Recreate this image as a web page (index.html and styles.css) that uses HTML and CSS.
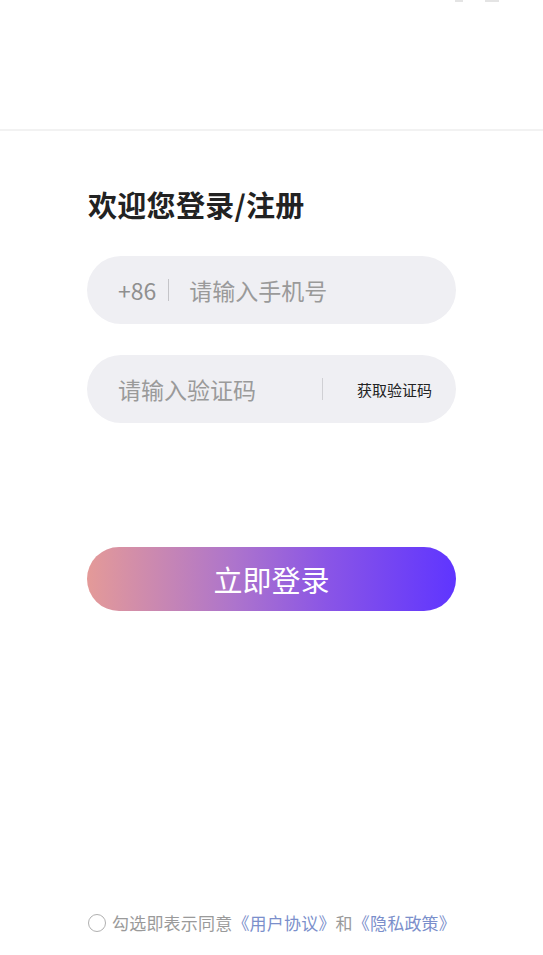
FILE: index.html
```html
<!DOCTYPE html>
<html lang="zh">
<head>
<meta charset="utf-8">
<link rel="stylesheet" href="styles.css">
</head>
<body>
<div class="page">
  <div class="header">
    <span class="mark mark-a"></span>
    <span class="mark mark-b"></span>
  </div>
  <div class="main">
    <h1 class="title">欢迎您登录/注册</h1>
    <div class="field">
      <span class="prefix">+86</span>
      <span class="sep"></span>
      <span class="ph">请输入手机号</span>
    </div>
    <div class="field field-code">
      <span class="ph">请输入验证码</span>
      <span class="sep sep-code"></span>
      <span class="getcode">获取验证码</span>
    </div>
    <div class="btn">立即登录</div>
  </div>
  <div class="footer">
    <span class="radio"></span>
    <span class="agree">勾选即表示同意<span class="link">《用户协议》</span>和<span class="link">《隐私政策》</span></span>
  </div>
</div>
</body>
</html>
```

FILE: styles.css
```css
html, body {
  margin: 0;
  padding: 0;
  background: #ffffff;
}
body {
  font-family: "Noto Sans CJK SC", "Noto Sans", sans-serif;
}
.page {
  width: 543px;
  height: 955px;
  display: flex;
  flex-direction: column;
  overflow: hidden;
}
.header {
  height: 129px;
  border-bottom: 2px solid #f2f2f2;
  display: flex;
  justify-content: flex-end;
  align-items: flex-start;
  gap: 22px;
  padding-right: 44px;
}
.mark {
  height: 2px;
  background: #e4e4e4;
}
.mark-a {
  width: 8px;
}
.mark-b {
  width: 14px;
}
.main {
  padding: 0 87px;
  display: flex;
  flex-direction: column;
}
.title {
  margin: 53px 0 0 1px;
  font-size: 29px;
  letter-spacing: 0.3px;
  line-height: 40px;
  font-weight: 700;
  color: #222222;
}
.field {
  margin-top: 32px;
  height: 68px;
  border-radius: 34px;
  background: #efeff3;
  display: flex;
  align-items: center;
  padding-left: 31px;
  padding-right: 24px;
}
.field-code {
  padding-left: 31px;
}
.prefix {
  font-size: 23px;
  color: #8f8f8f;
}
.sep {
  width: 1px;
  height: 22px;
  background: #c4c4c8;
  margin: 0 20px 0 12px;
}
.ph {
  font-size: 23px;
  color: #9a9a9a;
}
.sep-code {
  margin: 0 0 0 auto;
  background: #d0d0d4;
}
.getcode {
  margin-left: 34px;
  font-size: 15px;
  color: #222222;
}
.field + .field {
  margin-top: 31px;
}
.btn {
  margin-top: 124px;
  height: 64px;
  border-radius: 32px;
  background: linear-gradient(90deg, #e49a98 0%, #ad74cc 40%, #8a55e6 65%, #5f35ff 100%);
  color: #ffffff;
  font-size: 29px;
  display: flex;
  align-items: center;
  justify-content: center;
}
.footer {
  margin-top: auto;
  margin-bottom: 20px;
  padding-left: 88px;
  display: flex;
  align-items: center;
  gap: 6px;
}
.radio {
  width: 16px;
  height: 16px;
  border: 1px solid #b0b0b0;
  border-radius: 50%;
}
.agree {
  font-size: 17px;
  letter-spacing: 0.2px;
  color: #9a9a9a;
  line-height: 24px;
}
.link {
  color: #7b8fcb;
}
```
